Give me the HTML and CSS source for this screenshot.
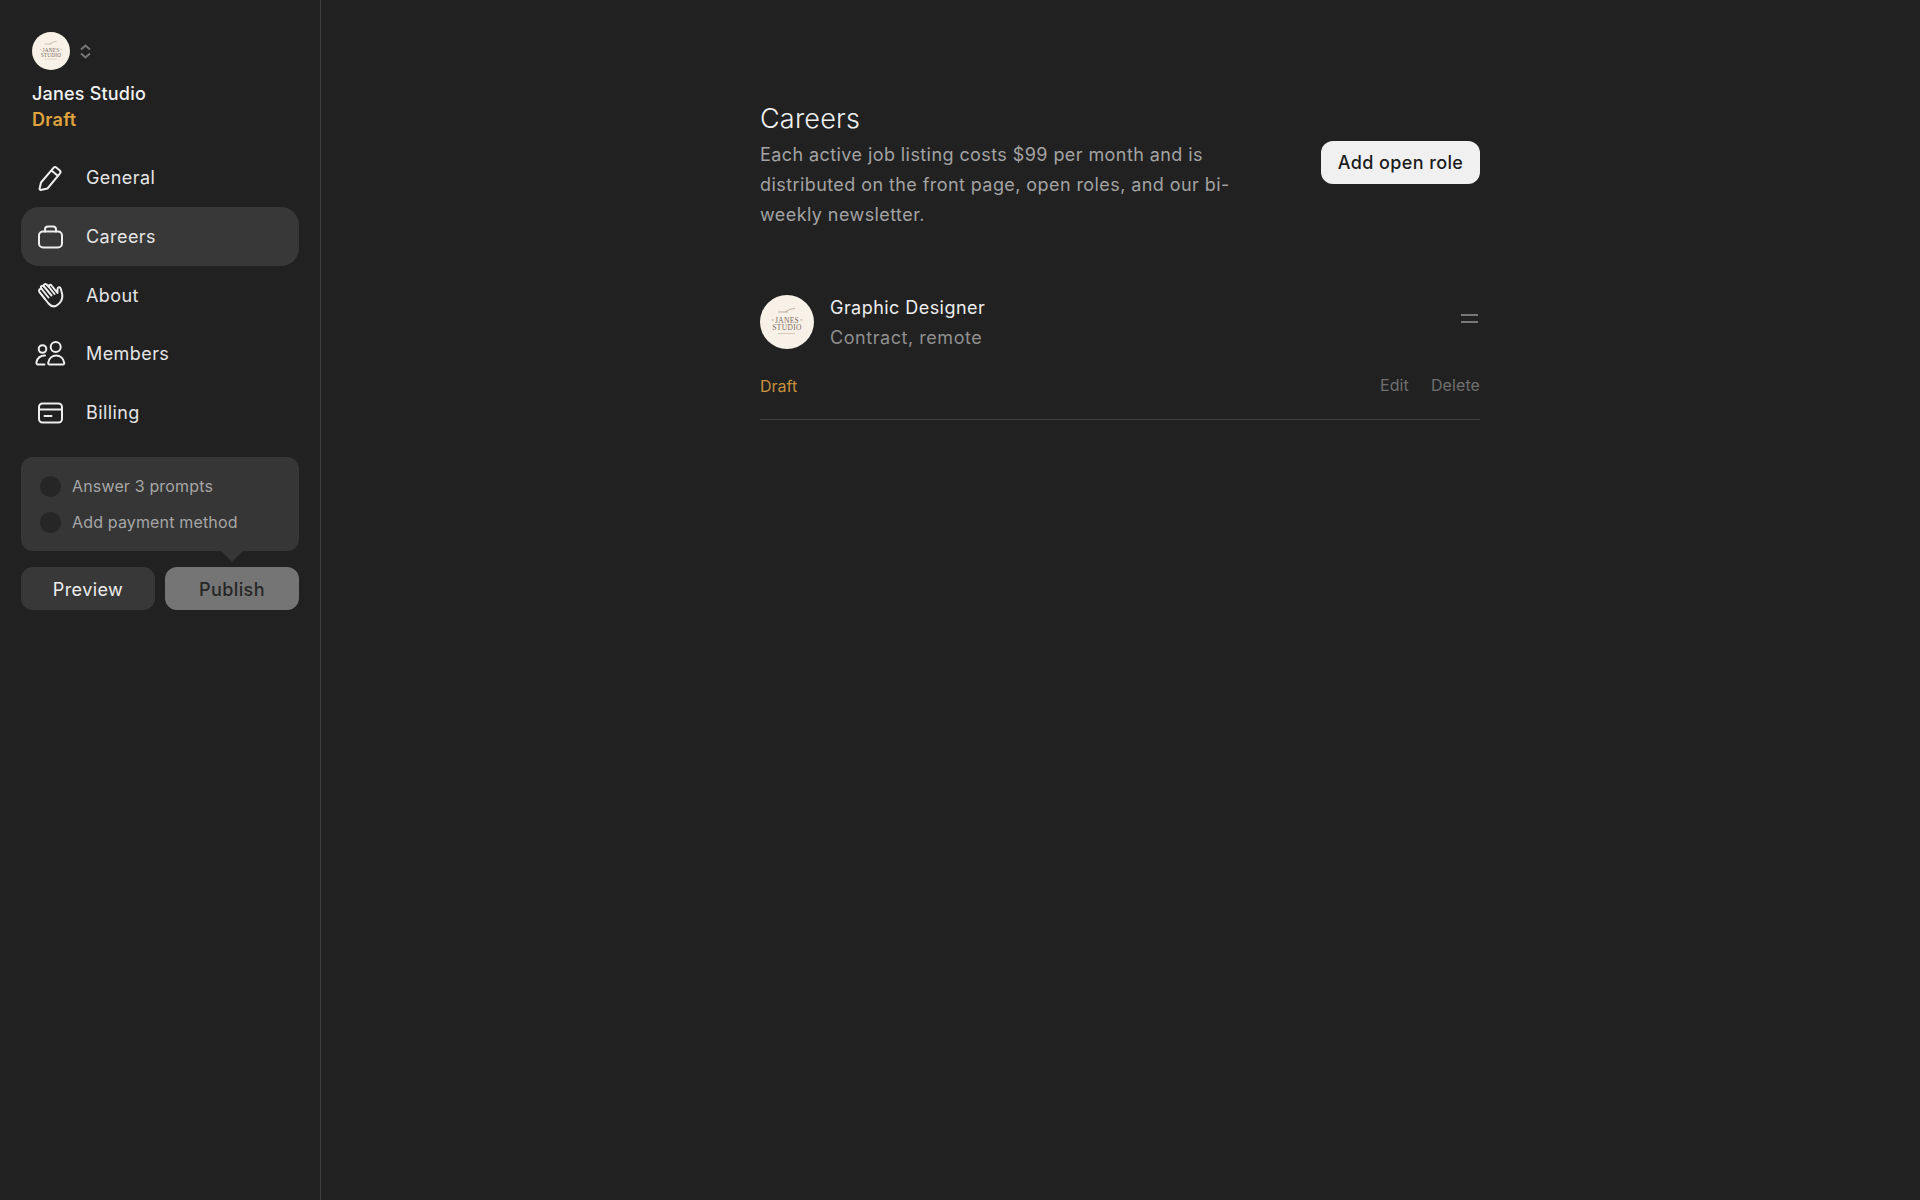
FILE: index.html
```html
<!DOCTYPE html>
<html lang="en">
<head>
<meta charset="utf-8">
<title>Careers</title>
<link rel="stylesheet" href="styles.css">
</head>
<body>
<div class="app">
  <aside class="sidebar">
    <div class="brand-row">
      <svg class="logo logo-sm" viewBox="0 0 54 54"><circle cx="27" cy="27" r="27" fill="#f8f1e8"/><path d="M18 17h10M25 17c3-2 6-3.500 10-3.500" stroke="#a8957f" stroke-width=".7" fill="none"/><path d="M11.500 25h2M40.500 25h2" stroke="#a8957f" stroke-width=".8"/><text x="27" y="28" class="logo-text">JANES</text><text x="27" y="35" class="logo-text">STUDIO</text><path d="M18 38.500h17" stroke="#c9b8a0" stroke-width=".7"/></svg>
      <svg class="chevrons" viewBox="0 0 11 15"><path d="M1 5.500 5.500 1.500 10 5.500M1 9.500 5.500 13.500 10 9.500" fill="none" stroke="#777" stroke-width="2"/></svg>
    </div>
    <div class="brand-name">Janes Studio</div>
    <div class="brand-status">Draft</div>
    <nav class="nav">
      <a class="nav-item"><svg class="nav-icon" viewBox="0 0 28 28"><path d="M3.500 25 5 18.500 17.500 3.800a2 2 0 0 1 2.800-.2l3.500 3a2 2 0 0 1 .2 2.800L11.500 24.500l-7 1.500ZM15.500 6.500l6.500 5.500"/></svg><span>General</span></a>
      <a class="nav-item active"><svg class="nav-icon" viewBox="0 0 28 28"><rect x="3" y="8.500" width="23" height="16" rx="4"/><path d="M9 8.500V6.500a3 3 0 0 1 3-3h5a3 3 0 0 1 3 3v2"/></svg><span>Careers</span></a>
      <a class="nav-item"><svg class="nav-icon" viewBox="0 0 28 28"><path d="M22 23.500c3.500-2.800 5-6.500 4-11l-1.300-5c-.5-1.800-3.200-1.500-3.200.7v3.800L15.500 4.500c-1.300-1.500-3.300-.2-2.500 1.500L10.500 3.500c-1.500-1.300-3.500.5-2.500 2L7.500 5C5.800 4 4.200 5.800 5.300 7.500 3.500 7.500 2.500 9.500 3.500 11l9 11.500c3 3.500 6.500 3.500 9.500 1Z"/><path d="M13 6l5.500 7M8 5.500l7.500 9M5.300 7.500l7.200 9M3.800 11.500l5.200 6.500"/></svg><span>About</span></a>
      <a class="nav-item"><svg class="nav-icon icon-wide" viewBox="0 0 32 28"><circle cx="8.500" cy="9" r="3.800"/><circle cx="21.700" cy="7" r="5"/><path d="M11 15.500c-4 0-7.500 2.500-8.500 6.500-.3 1.500.3 2.500 1.500 2.500h6.500"/><path d="M15.500 24.500c-1 0-1.500-.8-1.300-1.800.8-4 4-7.200 8-7.200s7.200 3.200 8 7.200c.2 1-.3 1.800-1.300 1.800Z"/></svg><span>Members</span></a>
      <a class="nav-item"><svg class="nav-icon" viewBox="0 0 28 28"><rect x="3" y="4.500" width="23" height="19" rx="3.500"/><path d="M3 10.500h23M8.500 17h7"/></svg><span>Billing</span></a>
    </nav>
    <div class="checklist">
      <div class="check-row"><span class="check-dot"></span><span>Answer 3 prompts</span></div>
      <div class="check-row"><span class="check-dot"></span><span>Add payment method</span></div>
    </div>
    <div class="actions">
      <button class="btn btn-preview">Preview</button>
      <button class="btn btn-publish">Publish</button>
    </div>
  </aside>
  <main class="main">
    <div class="content">
      <header class="header">
        <div class="header-text">
          <h1 class="title">Careers</h1>
          <p class="desc">Each active job listing costs $99 per month and is distributed on the front page, open roles, and our bi-weekly newsletter.</p>
        </div>
        <button class="btn-add">Add open role</button>
      </header>
      <article class="role">
        <div class="role-top">
          <svg class="logo logo-lg" viewBox="0 0 54 54"><circle cx="27" cy="27" r="27" fill="#f8f1e8"/><path d="M18 17h10M25 17c3-2 6-3.500 10-3.500" stroke="#a8957f" stroke-width=".7" fill="none"/><path d="M11.500 25h2M40.500 25h2" stroke="#a8957f" stroke-width=".8"/><text x="27" y="28" class="logo-text">JANES</text><text x="27" y="35" class="logo-text">STUDIO</text><path d="M18 38.500h17" stroke="#c9b8a0" stroke-width=".7"/></svg>
          <div class="role-info">
            <div class="role-name">Graphic Designer</div>
            <div class="role-meta">Contract, remote</div>
          </div>
          <div class="drag"><span></span><span></span></div>
        </div>
        <div class="role-bottom">
          <span class="role-status">Draft</span>
          <span class="role-links"><a>Edit</a><a>Delete</a></span>
        </div>
      </article>
    </div>
  </main>
</div>
</body>
</html>
```
FILE: styles.css
```css
* { box-sizing: border-box; }
html, body { margin: 0; height: 100%; }
body { background: #212121; color: #eee; font-family: Inter, "Open Sans", sans-serif; }
.app { display: flex; min-height: 1200px; }
.sidebar { width: 321px; flex: none; border-right: 1px solid #414141; padding: 32px 21px 0; }
.brand-row { display: flex; align-items: center; gap: 10px; padding-left: 11px; }
.logo { display: block; flex: none; }
.logo-sm { width: 38px; height: 38px; }
.logo-lg { width: 54px; height: 54px; }
.logo-text { font-family: "Liberation Serif", serif; font-size: 7.5px; letter-spacing: .3px; fill: #7a6a58; text-anchor: middle; }
.chevrons { width: 11px; height: 15px; }
.brand-name { margin-top: 11px; padding-left: 11px; font-size: 18px; line-height: 26px; font-weight: 500; letter-spacing: .2px; color: #f2f2f2; }
.brand-status { padding-left: 11px; font-size: 18px; line-height: 26px; font-weight: 600; letter-spacing: .3px; color: #e0a33e; }
.nav { margin-top: 15.5px; display: flex; flex-direction: column; }
.nav-item { display: flex; align-items: center; height: 58.7px; padding-left: 15px; gap: 22px; border-radius: 18px; font-size: 18px; letter-spacing: .42px; color: #e6e6e6; }
.nav-item.active { background: #383838; }
.nav-icon { width: 28px; height: 28px; flex: none; fill: none; stroke: #eee; stroke-width: 2; stroke-linejoin: round; stroke-linecap: round; }
.icon-wide { width: 32px; margin-left: -2px; margin-right: -2px; }
.checklist { margin-top: 15.5px; height: 94px; background: #363636; border-radius: 12px; padding: 11px 19px; position: relative; display: flex; flex-direction: column; }
.checklist::after { content: ""; position: absolute; left: 200px; bottom: -11px; border: 11px solid transparent; border-top-color: #363636; border-bottom: 0; }
.check-row { display: flex; align-items: center; height: 36.500px; gap: 11px; font-size: 16px; letter-spacing: .16px; color: #a6a6a6; }
.check-dot { width: 21px; height: 21px; border-radius: 50%; background: #262626; flex: none; }
.actions { display: flex; gap: 10px; margin-top: 16px; }
.btn { flex: 1; height: 43px; border: 0; border-radius: 12px; padding: 1px 0 0; font: 18px Inter, sans-serif; letter-spacing: .4px; }
.btn-preview { background: #383838; color: #eee; }
.btn-publish { background: #757575; color: #262626; font-weight: 500; }
.main { flex: 1; padding: 100px 0 0 439px; }
.content { width: 720px; }
.header { display: flex; justify-content: space-between; align-items: flex-start; }
.header-text { width: 480px; }
.title { margin: 0; font-size: 27px; line-height: 38px; font-weight: 300; letter-spacing: .2px; color: #f0f0f0; }
.desc { margin: 1.500px 0 0; font-size: 18px; line-height: 30px; letter-spacing: .42px; color: #a3a3a3; }
.btn-add { margin-top: 41px; width: 159px; height: 43px; border: 0; border-radius: 12px; background: #f0f0f0; color: #1c1c1c; font: 500 18px Inter, sans-serif; letter-spacing: .4px; }
.role { margin-top: 61.500px; border-bottom: 1px solid #3f3f3f; padding-bottom: 22px; }
.role-top { display: flex; align-items: center; gap: 16px; height: 61px; }
.role-info { flex: 1; padding-top: 3px; }
.role-name { font-size: 18px; line-height: 30px; letter-spacing: .45px; color: #eee; }
.role-meta { font-size: 18px; line-height: 30px; letter-spacing: .55px; color: #8f8f8f; }
.drag { display: flex; flex-direction: column; gap: 5px; margin: -6px 2px 0 0; }
.drag span { display: block; width: 17px; height: 2px; background: #777; }
.role-bottom { display: flex; justify-content: space-between; align-items: center; margin-top: 20px; font-size: 16px; line-height: 24px; }
.role-status { color: #c9913f; padding-top: 3px; line-height: 22px; }
.role-links { display: flex; gap: 22px; letter-spacing: .1px; color: #6f6f6f; }
```
